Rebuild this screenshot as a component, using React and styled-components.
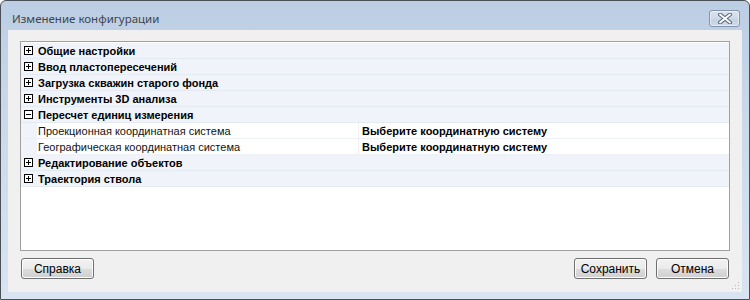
import React, { useState } from 'react';
import styled, { createGlobalStyle } from 'styled-components';

const GlobalStyle = createGlobalStyle`
	html, body {
		margin: 0;
		padding: 0;
		background: #ffffff;
	}
	* {
		box-sizing: border-box;
	}
`;

const categories = [
	{ title: 'Общие настройки', open: false },
	{ title: 'Ввод пластопересечений', open: false },
	{ title: 'Загрузка скважин старого фонда', open: false },
	{ title: 'Инструменты 3D анализа', open: false },
	{
		title: 'Пересчет единиц измерения',
		open: true,
		props: [
			{ name: 'Проекционная координатная система', value: 'Выберите координатную систему' },
			{ name: 'Географическая координатная система', value: 'Выберите координатную систему' },
		],
	},
	{ title: 'Редактирование объектов', open: false },
	{ title: 'Траектория ствола', open: false },
];

export default function App() {
	const [groups, setGroups] = useState(categories);

	const toggle = (idx) => {
		setGroups(groups.map((g, i) => (i === idx ? { ...g, open: !g.open } : g)));
	};

	return (
		<>
			<GlobalStyle />
			<Window>
				<TitleBar>
					<Title>Изменение конфигурации</Title>
					<CloseButton>
						<svg width="18" height="11" viewBox="0 0 18 11">
							<path
								d="M4 1.5 L14 9.5 M14 1.5 L4 9.5"
								stroke="#59657a"
								strokeWidth="4"
								strokeLinecap="round"
							/>
							<path
								d="M4 1.5 L14 9.5 M14 1.5 L4 9.5"
								stroke="#ffffff"
								strokeWidth="2"
								strokeLinecap="round"
							/>
						</svg>
					</CloseButton>
				</TitleBar>
				<Client>
					<Grid>
						{groups.map((g, i) => (
							<React.Fragment key={g.title}>
								<CategoryRow onClick={() => toggle(i)}>
									<Margin>
										<Expander>
											<svg width="9" height="9" viewBox="0 0 9 9">
												<rect x="0.5" y="0.5" width="8" height="8" fill="#ffffff" stroke="#000000" />
												<path d="M2 4.5 H7" stroke="#000000" />
												{!g.open && <path d="M4.5 2 V7" stroke="#000000" />}
											</svg>
										</Expander>
									</Margin>
									<CategoryLabel>{g.title}</CategoryLabel>
								</CategoryRow>
								{g.open &&
									g.props &&
									g.props.map((p) => (
										<PropRow key={p.name}>
											<Margin />
											<NameCell>{p.name}</NameCell>
											<ValueCell>{p.value}</ValueCell>
										</PropRow>
									))}
							</React.Fragment>
						))}
					</Grid>
					<Buttons>
						<Button>Справка</Button>
						<Spacer />
						<Button>Сохранить</Button>
						<Button>Отмена</Button>
					</Buttons>
					<Grip>
						<svg width="10" height="10" viewBox="0 0 10 10">
							<rect x="8" y="2" width="1" height="1" fill="#b8b8b8" />
							<rect x="5" y="5" width="1" height="1" fill="#b8b8b8" />
							<rect x="8" y="5" width="1" height="1" fill="#b8b8b8" />
							<rect x="2" y="8" width="1" height="1" fill="#b8b8b8" />
							<rect x="5" y="8" width="1" height="1" fill="#b8b8b8" />
							<rect x="8" y="8" width="1" height="1" fill="#b8b8b8" />
						</svg>
					</Grip>
				</Client>
			</Window>
		</>
	);
}

const Window = styled.div`
	width: 750px;
	height: 300px;
	border: 1px solid #4b4f57;
	border-radius: 6px 6px 0 0;
	background: linear-gradient(#bccee4 0%, #cbd9ea 40%, #d8e4f1 100%);
	padding: 0 7px 7px 7px;
	display: flex;
	flex-direction: column;
	font-family: 'Liberation Sans', Arial, sans-serif;
`;

const TitleBar = styled.div`
	height: 29px;
	padding: 6px 2px 0 4px;
	display: flex;
	align-items: center;
	justify-content: space-between;
`;

const Title = styled.div`
	font-family: 'Noto Sans', sans-serif;
	font-size: 11.5px;
	color: #40454e;
`;

const CloseButton = styled.div`
	width: 31px;
	height: 17px;
	border: 1px solid #8594ab;
	border-radius: 3px;
	background: linear-gradient(#d9e3ef 0%, #cfdae8 50%, #c3d1e2 51%, #cdd9e8 100%);
	box-shadow: inset 0 0 0 1px rgba(255, 255, 255, 0.5);
	display: flex;
	align-items: center;
	justify-content: center;
`;

const Client = styled.div`
	position: relative;
	flex: 1;
	background: #f0f0f0;
	padding: 11px 12px 13px 12px;
	display: flex;
	flex-direction: column;
	gap: 7px;
`;

const Grid = styled.div`
	flex: 1;
	background: #ffffff;
	border: 1px solid #a0a0a0;
	padding-top: 1px;
	font-size: 11px;
	color: #000000;
	overflow: hidden;
`;

const Row = styled.div`
	display: flex;
	height: 16px;
	border-bottom: 1px solid ${(p) => p.line};
	line-height: 16px;
	white-space: nowrap;
`;

const CategoryRow = styled(Row).attrs({ line: '#e4eaf2' })`
	background: #f0f4fa;
	cursor: default;
`;

const PropRow = styled(Row).attrs({ line: '#edf1f6' })`
	background: #ffffff;
`;

const Margin = styled.div`
	width: 16px;
	flex: none;
	background: #f0f4fa;
	display: flex;
	align-items: center;
	padding-left: 3px;
`;

const Expander = styled.div`
	width: 9px;
	height: 9px;
	display: flex;
`;

const CategoryLabel = styled.div`
	padding-left: 1px;
	font-weight: bold;
`;

const NameCell = styled.div`
	width: 322px;
	flex: none;
	padding-left: 1px;
	border-right: 1px solid #edf1f6;
	color: #111111;
`;

const ValueCell = styled.div`
	padding-left: 3px;
	font-weight: bold;
`;

const Buttons = styled.div`
	display: flex;
	gap: 9px;
	padding: 0 1px;
`;

const Spacer = styled.div`
	flex: 1;
`;

const Button = styled.button`
	width: 73px;
	height: 21px;
	border: 1px solid #707070;
	border-radius: 3px;
	background: linear-gradient(#f2f2f2 0%, #ebebeb 50%, #dddddd 51%, #cfcfcf 100%);
	box-shadow: inset 0 0 0 1px #fcfcfc;
	font-family: 'Liberation Sans', Arial, sans-serif;
	font-size: 12px;
	color: #000000;
	padding: 0;
`;

const Grip = styled.div`
	position: absolute;
	right: 2px;
	bottom: 2px;
	width: 10px;
	height: 10px;
	display: flex;
`;
